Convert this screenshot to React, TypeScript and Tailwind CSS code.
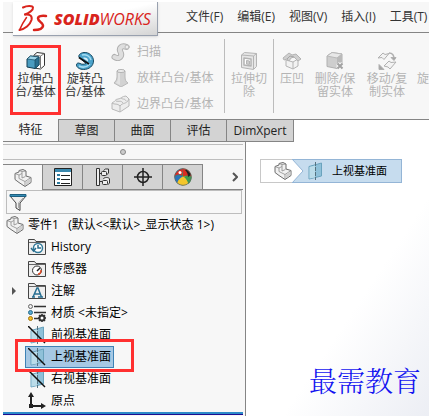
import type { ReactNode } from 'react';

const menus = ['文件(F)', '编辑(E)', '视图(V)', '插入(I)', '工具(T)'];
const ribbonTabs = ['特征', '草图', '曲面', '评估', 'DimXpert'];

function Logo() {
    return (
        <div className="relative z-10 ml-[10px] flex h-[34px] w-[145px] shrink-0 items-center self-start border-r border-b border-gray-400 bg-linear-to-br from-white via-white to-[#d4d4d4] pl-[5px] text-[#d9241c] shadow-sm">
            <svg className="h-7 w-8 shrink-0" viewBox="0 0 32 28" fill="none" stroke="currentColor" strokeLinecap="round" strokeLinejoin="round">
                <path d="M5 2.500C9 .5 14.500.5 15 2.500C15.500 5 11 8 7 9.500" strokeWidth="2" />
                <path d="M7 9.500C12 9 14.500 11 13.500 15C12 20 7 24 1.500 25" strokeWidth="2" />
                <path d="M8.500 12.500C6 16 3.500 20 1.500 25" strokeWidth="1.500" />
                <path d="M28 11C23.500 10.500 20 11 20 13.500C20 16.500 25.500 18 25 21C24.500 24.500 20.500 25 16 25" strokeWidth="2.500" />
            </svg>
            <span className="pl-1 font-['Open_Sans','Noto_Sans',sans-serif] text-base leading-5 italic">
                <b className="font-extrabold">SOLID</b>
                <span>WORKS</span>
            </span>
        </div>
    );
}

function ExtrudeIcon() {
    return (
        <svg className="h-[18px] w-5 shrink-0" viewBox="0 0 20 18" strokeLinejoin="round">
            <path d="M8 3l3-2.500 7.500 1v12l-4 3.500-6.500-1z" fill="#fff" stroke="#333" />
            <path d="M14.500 4v12M8 3l6.500 1 4-2.500" fill="none" stroke="#777" />
            <path d="M1 7l3.500-3 8.500 1v8l-4 3.500-8-1.500z" fill="#4a9cc0" stroke="#103c52" />
            <path d="M1 7l3.500-3 8.500 1-4 3z" fill="#9bd3e8" stroke="#174a63" strokeWidth=".7" />
            <path d="M9 8v8.500l4-3.500V5z" fill="#2a6f90" stroke="#174a63" strokeWidth=".7" />
        </svg>
    );
}

function RevolveIcon() {
    return (
        <svg className="h-[18px] w-5 shrink-0" viewBox="0 0 20 18" strokeLinejoin="round">
            <path d="M9 .5C14 0 18.500 4 18.500 9C18.500 14 14 17.500 8.500 17.500C5 17.500 1.500 15.500 1.500 13C1.500 11 3.500 10.500 5 11.500C7 12.500 9 12.500 11 11.500L4 5.500C3 3 5.500.8 9 .5z" fill="#4ba3cb" stroke="#174a63" />
            <path d="M7 3c4-1 8 1 9 5M4 14c4 2 8 1 11-2" fill="none" stroke="#a5dcf2" strokeWidth="1.500" />
            <path d="M4 5.500L14 12" stroke="#111" strokeWidth="1.500" />
            <path d="M8 6l5 3.500V7.500C12 6 10 5 8 6z" fill="#d9eff8" />
        </svg>
    );
}

function SweepIcon() {
    return (
        <svg className="h-[18px] w-5 shrink-0" viewBox="0 0 20 18" fill="none" strokeLinecap="round">
            <path d="M3.500 14c5 3 8-1 6-5s1-7 6-5" stroke="#b0b0b0" strokeWidth="6" />
            <path d="M3.500 14c5 3 8-1 6-5s1-7 6-5" stroke="#dedede" strokeWidth="4" />
            <circle cx="16" cy="4" r="2" fill="#eee" stroke="#bbb" />
        </svg>
    );
}

function LoftIcon() {
    return (
        <svg className="h-[18px] w-5 shrink-0" viewBox="0 0 20 18" strokeLinejoin="round">
            <path d="M6 2v6c0 3-2 5-3 6l7 4 7-4c-2-1-3-3-3-6V2z" fill="#d2d2d2" stroke="#b8b8b8" />
            <path d="M7 4v5c0 2-1 4-2 5l4 2V4z" fill="#e2e2e2" />
            <ellipse cx="10" cy="2" rx="4" ry="1.500" fill="#eee" stroke="#b2b2b2" />
        </svg>
    );
}

function BoundaryIcon() {
    return (
        <svg className="h-[18px] w-5 shrink-0" viewBox="0 0 20 18" fill="#ededed" stroke="#b8b8b8" strokeLinejoin="round">
            <path d="M1 8c3-1 3-4 6-4s4-3 8-3l3 3v7l-9 6-8-3z" />
            <path d="M1 8c3 2 5 0 8 3 3-4 6-1 9-7M9 11v6M5 6c3 1 5-1 7 2M10 3c2 2 4 0 5 3" fill="none" />
        </svg>
    );
}

function CutIcon() {
    return (
        <svg className="h-[18px] w-5 shrink-0" viewBox="0 0 20 18" fill="#e6e6e6" stroke="#b4b4b4" strokeLinejoin="round">
            <path d="M2.500 3l3-2.500 12 1v13l-3 3-12-2z" />
            <path d="M2.500 3l12 1v13M14.500 4l3-2.500" fill="none" />
            <path d="M5 6l7 1v7l-7-1z" fill="#fff" strokeWidth="1.500" />
            <path d="M7.500 8.500l3 .5v3.500l-3-.5z" fill="#ccc" />
        </svg>
    );
}

function IndentIcon() {
    return (
        <svg className="h-[18px] w-5 shrink-0" viewBox="0 0 20 18" fill="#f2f2f2" stroke="#b4b4b4" strokeLinejoin="round">
            <path d="M4 8l7 2 5-3v7l-5 3-7-3z" />
            <path d="M11 10v7" />
            <path d="M1 6l6-5 3 2 4-1 5 5-3 2-4-4-3 1-2 3-2-2-3 1z" fill="#cfcfcf" />
            <path d="M5 7l3-3 4 1" fill="none" stroke="#a5a5a5" />
        </svg>
    );
}

function DeleteBodyIcon() {
    return (
        <svg className="h-[18px] w-5 shrink-0" viewBox="0 0 20 18" strokeLinejoin="round">
            <path d="M2 4l5-3.500 10 1.500v10.500l-5 4-10-2z" fill="#cecece" stroke="#b0b0b0" />
            <path d="M2 4l10 2 5-4-10-1.500z" fill="#e8e8e8" stroke="#b9b9b9" />
            <path d="M12 6v10l5-4V2z" fill="#bababa" />
            <path d="M12.500 11.500l5 5M17.500 11.500l-5 5" stroke="#f7f7f7" strokeWidth="4" />
            <path d="M12.500 11.500l5 5M17.500 11.500l-5 5" stroke="#a2a2a2" strokeWidth="2" />
        </svg>
    );
}

function MoveCopyIcon() {
    return (
        <svg className="h-[18px] w-5 shrink-0" viewBox="0 0 20 18" fill="#f3f3f3" stroke="#b0b0b0" strokeLinejoin="round">
            <path d="M1 6l5-5 2 1.500 4-1-5 6-2-2z" />
            <path d="M7 14l5-5 2 1.500 5-.5-6 7-2-2z" />
            <path d="M12 1c4 0 5 2 5 6" fill="none" strokeWidth="1.500" />
            <path d="M14 5.500h5L17 8.500zM2 12.500v5h5z" fill="#a5a5a5" />
        </svg>
    );
}

function PartIcon() {
    return (
        <svg className="h-[18px] w-[18px] shrink-0" viewBox="0 0 18 18" strokeLinejoin="round">
            <path d="M1 4.500l4-1.500V1.500l4-1 3 1.500v5l5 1.500v5l-6 4-6-4-4-3z" fill="#f1f1f1" stroke="#6d6d6d" />
            <path d="M1 4.500l4 1.500v3.500l6 3V17M5 6l3-1.500M8 5V2.500l4-.5M8 2.500L5 1.500M8 5v4l3.500-1.500M11 12.500l6-4" fill="none" stroke="#8c8c8c" strokeWidth=".8" />
            <path d="M11.500 13l5-3.500v3.500l-5 3.500z" fill="#cfcfcf" />
        </svg>
    );
}

function PropertyIcon() {
    return (
        <svg className="h-[18px] w-[18px] shrink-0" viewBox="0 0 18 18">
            <path d="M.5.5h17v17H.5z" fill="#fff" stroke="#222" />
            <path d="M1 1h16v3H1z" fill="#3988ad" />
            <path d="M3 6h3v2H3zM3 10h3v2H3zM3 14h3v2H3z" fill="#2c7ba0" />
            <path d="M7 7.500h9M7 11.500h9M7 15.500h9" stroke="#222" />
        </svg>
    );
}

function ConfigIcon() {
    return (
        <svg className="h-[18px] w-[18px] shrink-0" viewBox="0 0 18 18" fill="#eee" stroke="#333">
            <path d="M2.500.5h3v17h-3zM5.500 5.500h4M5.500 13.500h4" />
            <path d="M9.500 2.500l2-1.500h3v4l-2 2" />
            <rect x="7.500" y="3.500" width="5" height="4" rx="1" />
            <path d="M9.500 11c0-2 6-2 6 0v4l-2 2" />
            <rect x="8.500" y="12.500" width="5" height="4" rx="1" />
        </svg>
    );
}

function TargetIcon() {
    return (
        <svg className="h-[18px] w-[18px] shrink-0" viewBox="0 0 18 18" fill="none" stroke="#222" strokeWidth="1.500">
            <circle cx="9" cy="9" r="5.500" />
            <path d="M9 0v18M0 9h18" />
        </svg>
    );
}

function AppearanceIcon() {
    return (
        <svg className="h-[18px] w-[18px] shrink-0" viewBox="0 0 18 18">
            <circle cx="9" cy="9" r="8.500" fill="#3d9c50" />
            <path d="M9 .5A8.500 8.500 0 0 0 .5 9C3 7 6 7 8 8z" fill="#2272b8" />
            <path d="M1 6C3 3 6 1 9 .5L8 8C5 6 3 6 .5 9z" fill="#d92e22" />
            <path d="M.5 9c3-2 6-2 8.500-.5-1 4-1 6 0 9A8.500 8.500 0 0 1 .5 9z" fill="#2b75ba" />
            <path d="M3 15c2-4 4-6 6-6.500 3 0 6 1 8 3-2 4-5 6-8 6-2 0-4-1-6-2.500z" fill="#f3c62b" />
            <path d="M10 9c3-1 5-1 7.500 0 0 3-1 5-3 7-1-3-2-5-4.500-7z" fill="#3d9c50" />
            <path d="M9 .5c4 0 8 3 8.500 8C14 7 12 7 9 8.500z" fill="#d92e22" />
            <path d="M11 2c3-1 5 3 6 5l-3 2c0-3-1-5-3-7z" fill="#222" />
            <circle cx="6" cy="4.500" r="1.500" fill="#fff" />
            <circle cx="9" cy="9" r="8.300" fill="none" stroke="#666" strokeWidth=".7" />
        </svg>
    );
}

function FolderIcon({ children }: { children: ReactNode }) {
    return (
        <svg className="h-[18px] w-[18px] shrink-0" viewBox="0 0 18 18">
            <path d="M.5 16.500v-15h6l1.500 2h9.500v13z" fill="#eee" stroke="#444" />
            <path d="M1 4.500h16" stroke="#666" />
            {children}
        </svg>
    );
}

function MaterialIcon() {
    return (
        <svg className="h-[18px] w-[18px] shrink-0" viewBox="0 0 18 18" stroke="#333">
            <path d="M6 2.500h12M6 8.500h12M6 14.500h5" strokeWidth="1.500" />
            <circle cx="2.500" cy="2.500" r="2" fill="#eee" stroke="#666" />
            <circle cx="2.500" cy="8.500" r="2" fill="#57a9cf" stroke="#286c8c" />
            <circle cx="2.500" cy="14.500" r="2" fill="#f5bd22" stroke="#a27510" />
            <circle cx="14" cy="14" r="2.500" fill="#fff" strokeWidth="2" />
            <path d="M14 10v1.500M14 16.500V18M10 14h1.500M16.500 14H18M11 11l1 1M16 16l1 1M17 11l-1 1M12 16l-1 1" strokeWidth="1.500" />
        </svg>
    );
}

function PlaneIcon({ slash = true }: { slash?: boolean }) {
    return (
        <svg className="h-[18px] w-[18px] shrink-0" viewBox="0 0 18 18">
            <path d="M3 4.500L15.500 1v13L3 17z" fill="#8fc1d9" stroke="#6aa3bd" />
            <path d="M3.500 5L9 3.500v12l-5.500 1z" fill="#bbdce9" />
            <path d="M9.500 0v18" stroke="#55727f" strokeDasharray="4 1" />
            {slash && <path d="M0 0l17 17" stroke="#111" strokeWidth="1.500" />}
        </svg>
    );
}

function OriginIcon() {
    return (
        <svg className="h-[18px] w-[18px] shrink-0" viewBox="0 0 18 18" fill="#222">
            <path d="M2 4h2v9h10v2H2z" />
            <path d="M3 0l3 5H0zM18 14l-5-3v6z" />
            <path d="M1 12h4v4H1z" />
        </svg>
    );
}

function FilterIcon() {
    return (
        <svg className="h-[18px] w-[18px] shrink-0" viewBox="0 0 18 18" strokeLinejoin="round">
            <path d="M1 3l6 7v5l4 2.500V10l6-7z" fill="#eee" stroke="#444" />
            <path d="M14 5l-4.500 5v5" fill="none" stroke="#aaa" />
            <path d="M1 1.500h16v2H1z" fill="#348bb3" stroke="#1d5f80" />
        </svg>
    );
}

interface RibbonButtonProps {
    icon: ReactNode;
    lines: string[];
    className: string;
}

function RibbonButton({ icon, lines, className }: RibbonButtonProps) {
    return (
        <button className={`flex shrink-0 flex-col items-center text-xs leading-[13px] whitespace-nowrap ${className}`}>
            {icon}
            {lines.map((line, i) => (
                <span key={line} className={i === 0 ? 'mt-[2px]' : ''}>{line}</span>
            ))}
        </button>
    );
}

function Ribbon() {
    const features = [
        { icon: <SweepIcon />, label: '扫描' },
        { icon: <LoftIcon />, label: '放样凸台/基体' },
        { icon: <BoundaryIcon />, label: '边界凸台/基体' },
    ];

    return (
        <div className="flex h-[86px] overflow-hidden bg-[#f7f7f7] pl-[7px] text-[#333]">
            <RibbonButton className="mt-3 h-[70px] w-[51px] border-3 border-[#ff3030] pt-1" icon={<ExtrudeIcon />} lines={['拉伸凸', '台/基体']} />
            <RibbonButton className="w-12 pt-[19px]" icon={<RevolveIcon />} lines={['旋转凸', '台/基体']} />
            <div className="flex w-[115px] shrink-0 flex-col pt-[6px] pl-[2px] text-[#b4b4b4]">
                {features.map(({ icon, label }) => (
                    <button key={label} className="flex h-[26px] items-center gap-[6px] text-xs leading-4 whitespace-nowrap">
                        {icon}
                        {label}
                    </button>
                ))}
            </div>
            <div className="flex text-[#b4b4b4]">
                <RibbonButton className="my-[6px] w-[50px] border-x border-[#bcbcbc] pt-[13px]" icon={<CutIcon />} lines={['拉伸切', '除']} />
                <RibbonButton className="w-9 pt-[19px]" icon={<IndentIcon />} lines={['压凹']} />
                <RibbonButton className="w-[50px] pt-[19px]" icon={<DeleteBodyIcon />} lines={['删除/保', '留实体']} />
                <RibbonButton className="w-[54px] pt-[19px]" icon={<MoveCopyIcon />} lines={['移动/复', '制实体']} />
                <RibbonButton className="w-[42px] pt-[19px] pl-[3px] [&>span]:self-start" icon={<CutIcon />} lines={['旋']} />
            </div>
        </div>
    );
}

function RibbonTabs() {
    return (
        <div className="flex h-[23px] text-xs leading-4 text-[#222]">
            {ribbonTabs.map((tab, i) => (
                <button
                    key={tab}
                    className={`shrink-0 border-r border-b border-[#858585] ${i === 0 ? 'bg-[#f7f7f7]' : 'border-t bg-[#d3d3d3]'} ${tab === 'DimXpert' ? 'w-[67px]' : 'w-14'}`}
                >
                    {tab}
                </button>
            ))}
            <div className="flex-1 border-t border-[#858585]" />
        </div>
    );
}

function FeatureTree() {
    const rows = [
        {
            label: 'History',
            icon: (
                <FolderIcon>
                    <circle cx="10" cy="10" r="4.500" fill="#fff" stroke="#337a9a" strokeWidth="1.500" />
                    <path d="M10 7v3h3M3 10l2.500 3L8 10" fill="none" stroke="#286c8c" strokeWidth="1.500" />
                </FolderIcon>
            ),
        },
        {
            label: '传感器',
            icon: (
                <FolderIcon>
                    <circle cx="9" cy="10.500" r="4.500" fill="#fff" stroke="#333" />
                    <path d="M9 11l3-3" stroke="#222" strokeWidth="1.500" />
                    <path d="M10 14c2 0 3-2 3-4" fill="none" stroke="#e24a25" strokeWidth="1.500" />
                </FolderIcon>
            ),
        },
        {
            label: '注解',
            expandable: true,
            icon: (
                <FolderIcon>
                    <path d="M4 15h3M10 15h5M5 15l4-9h1l3.500 9M7 12h5" fill="none" stroke="#286f92" strokeWidth="1.500" />
                </FolderIcon>
            ),
        },
        { label: '材质 <未指定>', icon: <MaterialIcon /> },
        { label: '前视基准面', icon: <PlaneIcon /> },
        { label: '上视基准面', icon: <PlaneIcon />, selected: true },
        { label: '右视基准面', icon: <PlaneIcon /> },
        { label: '原点', icon: <OriginIcon /> },
    ];

    return (
        <div className="text-xs leading-4 text-black">
            <button className="flex h-[22px] items-center gap-1 pl-[3px] whitespace-pre">
                <PartIcon />
                零件1   (默认&lt;&lt;默认&gt;_显示状态 1&gt;)
            </button>
            <ul>
                {rows.map(({ label, icon, selected, expandable }) => (
                    <li key={label} className="relative flex h-[22px] items-center">
                        <span className="flex w-[22px] justify-center">
                            {expandable && (
                                <svg className="h-2 w-1" viewBox="0 0 4 8" fill="#555">
                                    <path d="M0 0l4 4-4 4z" />
                                </svg>
                            )}
                        </span>
                        <button
                            className={`flex h-[22px] items-center gap-1 border px-[2px] ${selected ? 'border-[#3e82b5] bg-[#a6c8e4]' : 'border-transparent'}`}
                        >
                            {icon}
                            <span className="pl-px">{label}</span>
                        </button>
                        {selected && (
                            <div className="pointer-events-none absolute -top-[7px] left-3 z-10 h-[33px] w-[119px] border-3 border-[#ff3030]" />
                        )}
                    </li>
                ))}
            </ul>
        </div>
    );
}

function SidePanel() {
    const tabs = [
        { name: 'properties', icon: <PropertyIcon /> },
        { name: 'configurations', icon: <ConfigIcon /> },
        { name: 'dimensions', icon: <TargetIcon /> },
        { name: 'appearance', icon: <AppearanceIcon /> },
    ];

    return (
        <aside className="w-[243px] shrink-0 border-r border-[#858585] bg-[#f7f7f7] pt-[2px]">
            <div className="mr-[2px] flex h-4 items-center justify-center border-y border-[#bdbdbd]">
                <span className="h-[6px] w-[6px] rounded-full border border-[#888] bg-[#ccc]" />
            </div>
            <div className="mt-1 mr-[2px] flex h-[26px]">
                <button aria-label="tree" className="flex w-[39px] items-center justify-center border-t border-[#858585]">
                    <PartIcon />
                </button>
                {tabs.map(({ name, icon }) => (
                    <button key={name} aria-label={name} className="flex w-10 items-center justify-center border-t border-b border-l border-[#858585] bg-[#d3d3d3]">
                        {icon}
                    </button>
                ))}
                <button aria-label="more" className="flex flex-1 items-center justify-end border-b border-l border-[#858585] pr-[5px]">
                    <svg className="h-[10px] w-[6px]" viewBox="0 0 6 10" fill="none" stroke="#555" strokeWidth="2">
                        <path d="M1 1l4 4-4 4" />
                    </svg>
                </button>
            </div>
            <div className="mr-[3px] ml-[3px] flex h-6 items-center border border-[#bdbdbd] pl-[2px]">
                <FilterIcon />
                <input aria-label="filter" className="min-w-0 flex-1 bg-transparent px-1 text-xs outline-none" />
            </div>
            <FeatureTree />
            <div className="mr-[2px] h-[3px] border-b border-[#1c0d91] bg-[#2d8bc9]" />
        </aside>
    );
}

function Viewport() {
    return (
        <main className="flex min-w-0 flex-1 flex-col items-start justify-between bg-linear-to-br from-white from-60% to-[#eceef4] pt-[17px] pl-[14px]">
            <nav className="flex h-6 text-[11px] leading-4 text-black">
                <button aria-label="part" className="flex w-8 items-center justify-end border border-r-0 border-[#c8c8c8] bg-white">
                    <PartIcon />
                </button>
                <svg className="h-6 w-3 shrink-0" viewBox="0 0 12 24">
                    <path d="M0 0h12v24H0z" fill="#c6dcee" />
                    <path d="M0 0l11 12L0 24z" fill="#fff" />
                    <path d="M0 .5h12M0 23.500h12M0 0l11 12L0 24" fill="none" stroke="#94b5d6" />
                </svg>
                <button className="flex items-center gap-2 border border-l-0 border-[#94b5d6] bg-[#c6dcee] pr-[14px] pl-[2px] whitespace-nowrap">
                    <PlaneIcon slash={false} />
                    上视基准面
                </button>
            </nav>
            <p className="self-end pr-2 pb-4 font-['Noto_Serif_CJK_SC','Noto_Sans_CJK_SC',serif] text-[28px] leading-10 font-light text-[#1414f0]">最需教育</p>
        </main>
    );
}

export default function App() {
    return (
        <div className="flex min-h-screen flex-col overflow-hidden bg-white pt-[2px] pl-[3px] font-['Open_Sans','Noto_Sans_CJK_SC',sans-serif]">
            <header className="flex h-[31px] items-center border-b border-[#858585] bg-[#f7f7f7]">
                <Logo />
                <div className="flex gap-[14px] pl-7 text-xs leading-4 whitespace-nowrap text-[#333]">
                    {menus.map((menu) => (
                        <button key={menu}>{menu}</button>
                    ))}
                </div>
            </header>
            <Ribbon />
            <RibbonTabs />
            <div className="flex flex-1">
                <SidePanel />
                <Viewport />
            </div>
        </div>
    );
}
